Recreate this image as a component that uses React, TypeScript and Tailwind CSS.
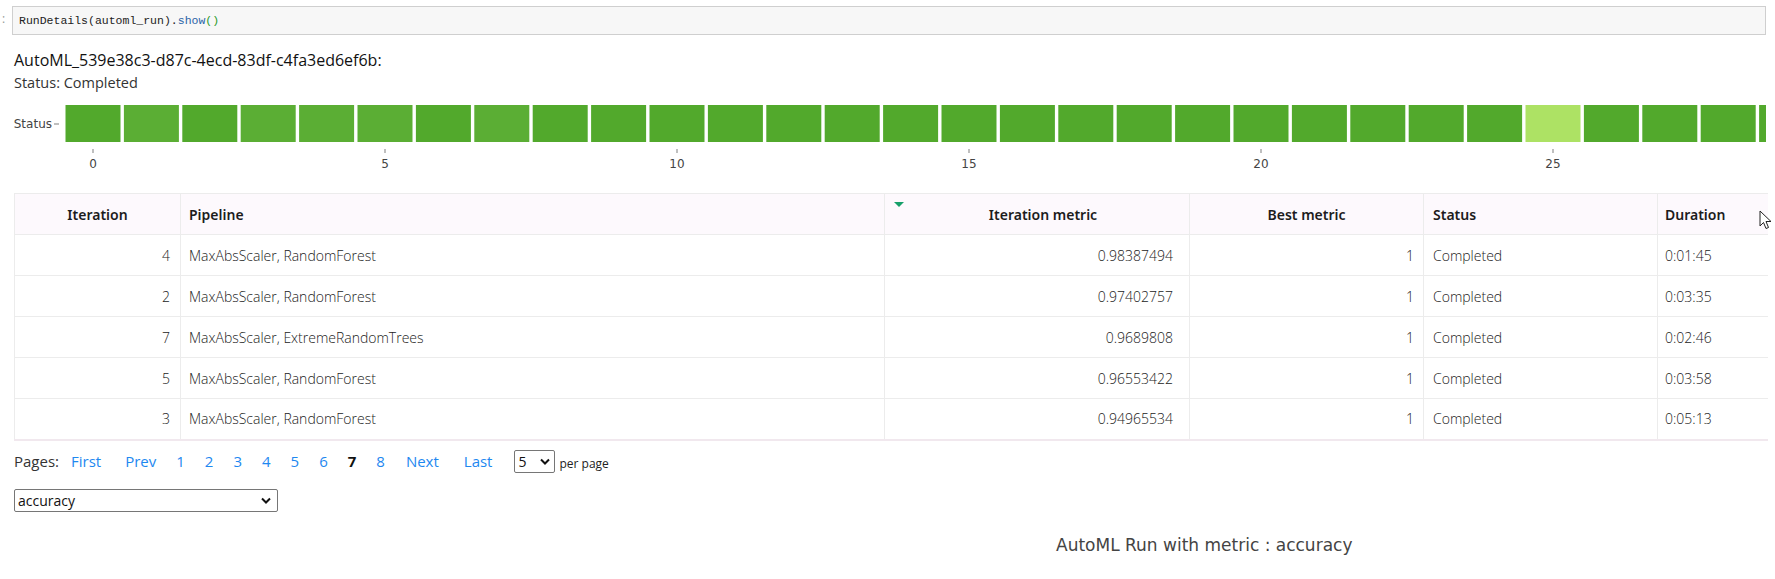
import React from 'react';

const BAR_PITCH = 58.4;
const BAR_W = 55;
const X0 = 93;

// bars that render a touch lighter in the widget
const lighter = [1, 3, 4, 5, 7];

const rows = [
    { it: 4, pipeline: 'MaxAbsScaler, RandomForest', metric: '0.98387494', best: '1', status: 'Completed', duration: '0:01:45' },
    { it: 2, pipeline: 'MaxAbsScaler, RandomForest', metric: '0.97402757', best: '1', status: 'Completed', duration: '0:03:35' },
    { it: 7, pipeline: 'MaxAbsScaler, ExtremeRandomTrees', metric: '0.9689808', best: '1', status: 'Completed', duration: '0:02:46' },
    { it: 5, pipeline: 'MaxAbsScaler, RandomForest', metric: '0.96553422', best: '1', status: 'Completed', duration: '0:03:58' },
    { it: 3, pipeline: 'MaxAbsScaler, RandomForest', metric: '0.94965534', best: '1', status: 'Completed', duration: '0:05:13' },
];

const Chevron = () => (
    <svg width="10" height="7" viewBox="0 0 10 7" className="pointer-events-none">
        <path d="M1 1.5 L5 5.5 L9 1.5" fill="none" stroke="#111" strokeWidth="2" />
    </svg>
);

const StatusChart = () => {
    const bars = Array.from({ length: 30 }, (_, i) => i);
    return (
        <svg width="1775" height="80" viewBox="0 0 1775 80" className="block">
            <defs>
                <clipPath id="plotClip">
                    <rect x="64" y="0" width="1702" height="80" />
                </clipPath>
            </defs>
            <text x="52" y="33" textAnchor="end" fontFamily="'DejaVu Sans', sans-serif" fontSize="12" fill="#444">Status</text>
            <line x1="54" x2="59" y1="29" y2="29" stroke="#aaa" strokeWidth="1.5" />
            <g clipPath="url(#plotClip)">
                {bars.map((i) => {
                    const fill = i === 25 ? '#ade264' : lighter.includes(i) ? '#5bae34' : '#52a92c';
                    return <rect key={i} x={X0 + i * BAR_PITCH - BAR_W / 2} y="10" width={BAR_W} height="37" fill={fill} />;
                })}
            </g>
            {[0, 5, 10, 15, 20, 25].map((t) => {
                const x = X0 + t * BAR_PITCH;
                return (
                    <g key={t}>
                        <line x1={x} x2={x} y1="54" y2="58" stroke="#aaa" strokeWidth="1.5" />
                        <text x={x} y="73" textAnchor="middle" fontFamily="'DejaVu Sans', sans-serif" fontSize="12" fill="#444">{t}</text>
                    </g>
                );
            })}
        </svg>
    );
};

const Cursor = () => (
    <svg width="13" height="20" viewBox="0 0 13 20" className="absolute left-[1759px] top-[210px]">
        <path d="M1 1 L1 16 L4.5 12.5 L7 18.5 L9.5 17.5 L7 11.5 L12 11.5 Z" fill="#fff" stroke="#222" strokeWidth="1" strokeLinejoin="round" />
    </svg>
);

export default function App() {
    const pages = ['1', '2', '3', '4', '5', '6', '7', '8'];
    return (
        <div className="relative w-[1775px] h-[579px] bg-white overflow-hidden text-[#222]" style={{ fontFamily: "'Open Sans', 'Noto Sans', sans-serif" }}>
            {/* code cell */}
            <div className="flex items-start pt-[6px]">
                <div className="w-[12px] pl-[2px] pt-[5px] text-[12px] text-[#999] leading-[16px]">:</div>
                <div className="flex-1 mr-[9px] h-[29px] bg-[#f7f7f7] border border-[#cfcfcf] flex items-center pl-[6px]">
                    <span className="text-[11.5px]" style={{ fontFamily: "'Liberation Mono', monospace" }}>
                        RunDetails(automl_run).<span className="text-[#2a64a8]">show</span><span className="text-[#2a9a2a]">()</span>
                    </span>
                </div>
            </div>

            {/* run header */}
            <div className="pl-[14px] mt-[14px]">
                <div className="text-[16px] leading-[22px] text-[#111]">AutoML_539e38c3-d87c-4ecd-83df-c4fa3ed6ef6b:</div>
                <div className="text-[14.5px] leading-[20px] mt-[2px] text-[#333]">Status: Completed</div>
            </div>

            {/* status chart */}
            <div className="mt-[2px] h-[80px]">
                <StatusChart />
            </div>

            {/* table */}
            <div className="ml-[14px] mt-[18px] w-[1753px]">
                <table className="w-full border-collapse table-fixed text-[14px]">
                    <colgroup>
                        <col className="w-[166px]" />
                        <col className="w-[704px]" />
                        <col className="w-[305px]" />
                        <col className="w-[234px]" />
                        <col className="w-[234px]" />
                        <col className="w-[110px]" />
                    </colgroup>
                    <thead>
                        <tr className="h-[41px] bg-[#fdf9fd] text-[#1c1c1c]" style={{ fontFamily: "'Noto Sans', sans-serif" }}>
                            <th className="border border-[#ececec] font-semibold text-center">Iteration</th>
                            <th className="border border-[#ececec] font-semibold text-left pl-[8px]">Pipeline</th>
                            <th className="relative border border-[#ececec] font-semibold text-center pl-[12px]">
                                <span className="absolute left-[9px] top-[8px] w-0 h-0 border-l-[5px] border-r-[5px] border-t-[5px] border-l-transparent border-r-transparent border-t-[#17a06a]" />
                                Iteration metric
                            </th>
                            <th className="border border-[#ececec] font-semibold text-center">Best metric</th>
                            <th className="border border-[#ececec] font-semibold text-left pl-[9px]">Status</th>
                            <th className="border border-[#ececec] border-r-0 font-semibold text-left pl-[7px]">Duration</th>
                        </tr>
                    </thead>
                    <tbody className="font-light text-[#222]">
                        {rows.map((r, idx) => (
                            <tr key={idx} className={`h-[41px] ${idx === rows.length - 1 ? 'border-b-2 border-[#f1e8ee]' : ''}`}>
                                <td className="border border-[#ececec] text-right pr-[10px]">{r.it}</td>
                                <td className="border border-[#ececec] pl-[8px]">{r.pipeline}</td>
                                <td className="border border-[#ececec] text-right pr-[16px]">{r.metric}</td>
                                <td className="border border-[#ececec] text-right pr-[9px]">{r.best}</td>
                                <td className="border border-[#ececec] pl-[9px]">{r.status}</td>
                                <td className="border border-[#ececec] border-r-0 pl-[7px]">{r.duration}</td>
                            </tr>
                        ))}
                    </tbody>
                </table>
            </div>

            {/* pagination */}
            <div className="flex items-center pl-[14px] mt-[9px] h-[24px] text-[15px]">
                <span className="text-[#333] mr-[12px]">Pages:</span>
                <div className="flex items-center gap-[20px] text-[#1e88f0]">
                    <span>First</span>
                    <span className="ml-[4px]">Prev</span>
                    {pages.map((p) => (
                        <span key={p} className={p === '7' ? 'font-bold text-[#111]' : ''}>{p}</span>
                    ))}
                    <span className="ml-[1px]">Next</span>
                    <span className="ml-[5px]">Last</span>
                </div>
                <div className="relative ml-[22px] w-[41px] h-[23px] border border-[#767676] rounded-[2px] flex items-center justify-between pl-[3px] pr-[4px]">
                    <span className="text-[14px] text-[#111]">5</span>
                    <Chevron />
                </div>
                <span className="ml-[4px] mt-[4px] text-[12px] text-[#222]">per page</span>
            </div>

            {/* metric select */}
            <div className="ml-[14px] mt-[15px] w-[264px] h-[23px] border border-[#767676] rounded-[2px] flex items-center justify-between pl-[3px] pr-[6px]">
                <span className="text-[14px] text-[#111]">accuracy</span>
                <Chevron />
            </div>

            {/* plot title */}
            <div className="pl-[1056px] mt-[21px] text-[17px] text-[#444]" style={{ fontFamily: "'DejaVu Sans', Verdana, sans-serif" }}>
                AutoML Run with metric : accuracy
            </div>

            <Cursor />
        </div>
    );
}
